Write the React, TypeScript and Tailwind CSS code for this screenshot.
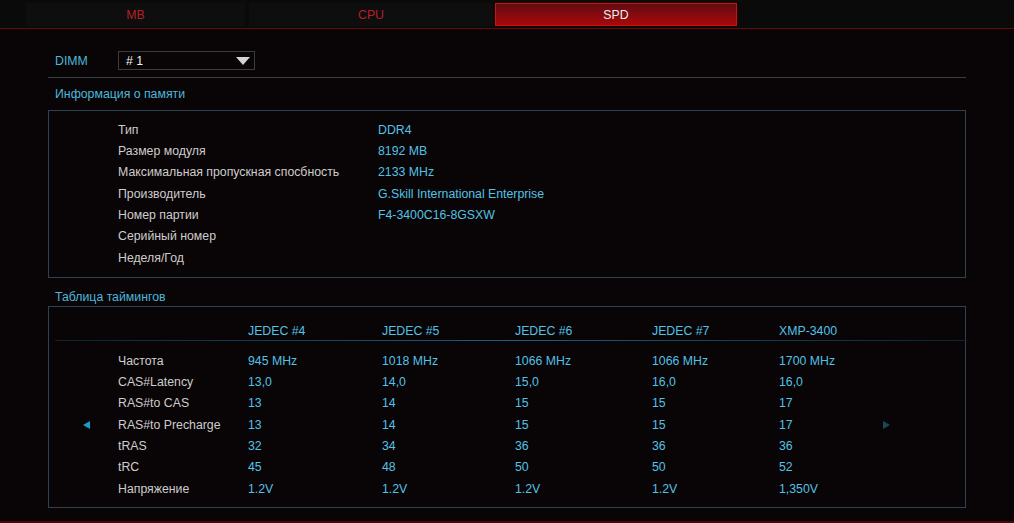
import React from "react";

const info: [string, string][] = [
  ["Тип", "DDR4"],
  ["Размер модуля", "8192 MB"],
  ["Максимальная пропускная спосбность", "2133 MHz"],
  ["Производитель", "G.Skill International Enterprise"],
  ["Номер партии", "F4-3400C16-8GSXW"],
  ["Серийный номер", ""],
  ["Неделя/Год", ""],
];

const headers = ["JEDEC #4", "JEDEC #5", "JEDEC #6", "JEDEC #7", "XMP-3400"];

const timings: [string, string[]][] = [
  ["Частота", ["945 MHz", "1018 MHz", "1066 MHz", "1066 MHz", "1700 MHz"]],
  ["CAS#Latency", ["13,0", "14,0", "15,0", "16,0", "16,0"]],
  ["RAS#to CAS", ["13", "14", "15", "15", "17"]],
  ["RAS#to Precharge", ["13", "14", "15", "15", "17"]],
  ["tRAS", ["32", "34", "36", "36", "36"]],
  ["tRC", ["45", "48", "50", "50", "52"]],
  ["Напряжение", ["1.2V", "1.2V", "1.2V", "1.2V", "1,350V"]],
];

const colW = ["w-[134px]", "w-[133px]", "w-[137px]", "w-[127px]", "w-[104px]"];

export default function App() {
  return (
    <div className="w-[1014px] h-[523px] bg-[#090405] font-['Liberation_Sans',Arial,sans-serif] text-[12.3px] leading-[14px] flex flex-col overflow-hidden">
      {/* Tabs */}
      <div className="h-[29px] bg-[#0a0a0a] border-b border-[#6a0808] flex items-start pt-[3px] pl-[26px] shrink-0">
        <div className="w-[219px] h-[23px] bg-[#0e0e0e] flex items-center justify-center text-[#b82024]">MB</div>
        <div className="w-[244px] h-[23px] ml-[4px] bg-[#0e0e0e] flex items-center justify-center text-[#b82024]">CPU</div>
        <div className="w-[242px] h-[23px] ml-[2px] border border-[#d01010] bg-gradient-to-b from-[#640a10] to-[#a8080a] flex items-center justify-center text-[#ececec]">SPD</div>
      </div>

      <div className="mx-[48px] flex flex-col">
        {/* DIMM row */}
        <div className="mt-[22px] h-[19px] flex items-center">
          <div className="w-[70px] pl-[7px] text-[#4bb8dc]">DIMM</div>
          <div className="w-[137px] h-[19px] border border-[#3c3c3c] flex items-center justify-between pl-[7px] pr-[4px] text-[#f0f0f0]">
            <span>#&nbsp;1</span>
            <svg width="14" height="8" viewBox="0 0 14 8">
              <polygon points="0,0 14,0 7,8" fill="#d4d4d4" />
            </svg>
          </div>
        </div>
        <div className="mt-[7px] h-px bg-[#383c44]" />

        {/* Memory info */}
        <div className="pt-[9px] pb-[9px] pl-[7px] text-[#4bb8dc]">Информация о памяти</div>
        <div className="h-[168px] border border-[#2e4252] pt-[8px]">
          {info.map(([l, v]) => (
            <div key={l} className="h-[21.33px] flex items-center pl-[69px]">
              <div className="w-[260px] text-[#cdcdcd]">{l}</div>
              <div className="text-[#52c2e6]">{v}</div>
            </div>
          ))}
        </div>

        {/* Timings */}
        <div className="pt-[12px] pb-[2px] pl-[7px] text-[#4bb8dc]">Таблица таймингов</div>
        <div className="h-[202px] border border-[#2e4252] pt-[17px] flex flex-col">
          <div className="flex pl-[199px] h-[14px]">
            {headers.map((h, i) => (
              <div key={h} className={`${colW[i]} text-[#52c2e6]`}>{h}</div>
            ))}
          </div>
          <div className="mt-[2px] ml-[6px] mr-[-2px] h-px bg-gradient-to-r from-[#0c2430] via-[#1d5f80] to-[#0c2430]" />
          <div className="mt-[9px] flex">
            <div className="w-[69px] flex items-center pl-[34px]">
              <svg width="7" height="8" viewBox="0 0 7 8">
                <polygon points="7,0 7,8 0,4" fill="#1b9ccc" />
              </svg>
            </div>
            <div className="flex flex-col">
              {timings.map(([l, vals]) => (
                <div key={l} className="h-[21.33px] flex items-center">
                  <div className="w-[130px] text-[#cdcdcd]">{l}</div>
                  {vals.map((v, i) => (
                    <div key={i} className={`${colW[i]} text-[#52c2e6]`}>{v}</div>
                  ))}
                </div>
              ))}
            </div>
            <div className="flex items-center">
              <svg width="7" height="8" viewBox="0 0 7 8">
                <polygon points="0,0 0,8 7,4" fill="#1a4858" />
              </svg>
            </div>
          </div>
        </div>
      </div>
      <div className="mt-auto h-[2px] bg-[#4a0808]" />
    </div>
  );
}
